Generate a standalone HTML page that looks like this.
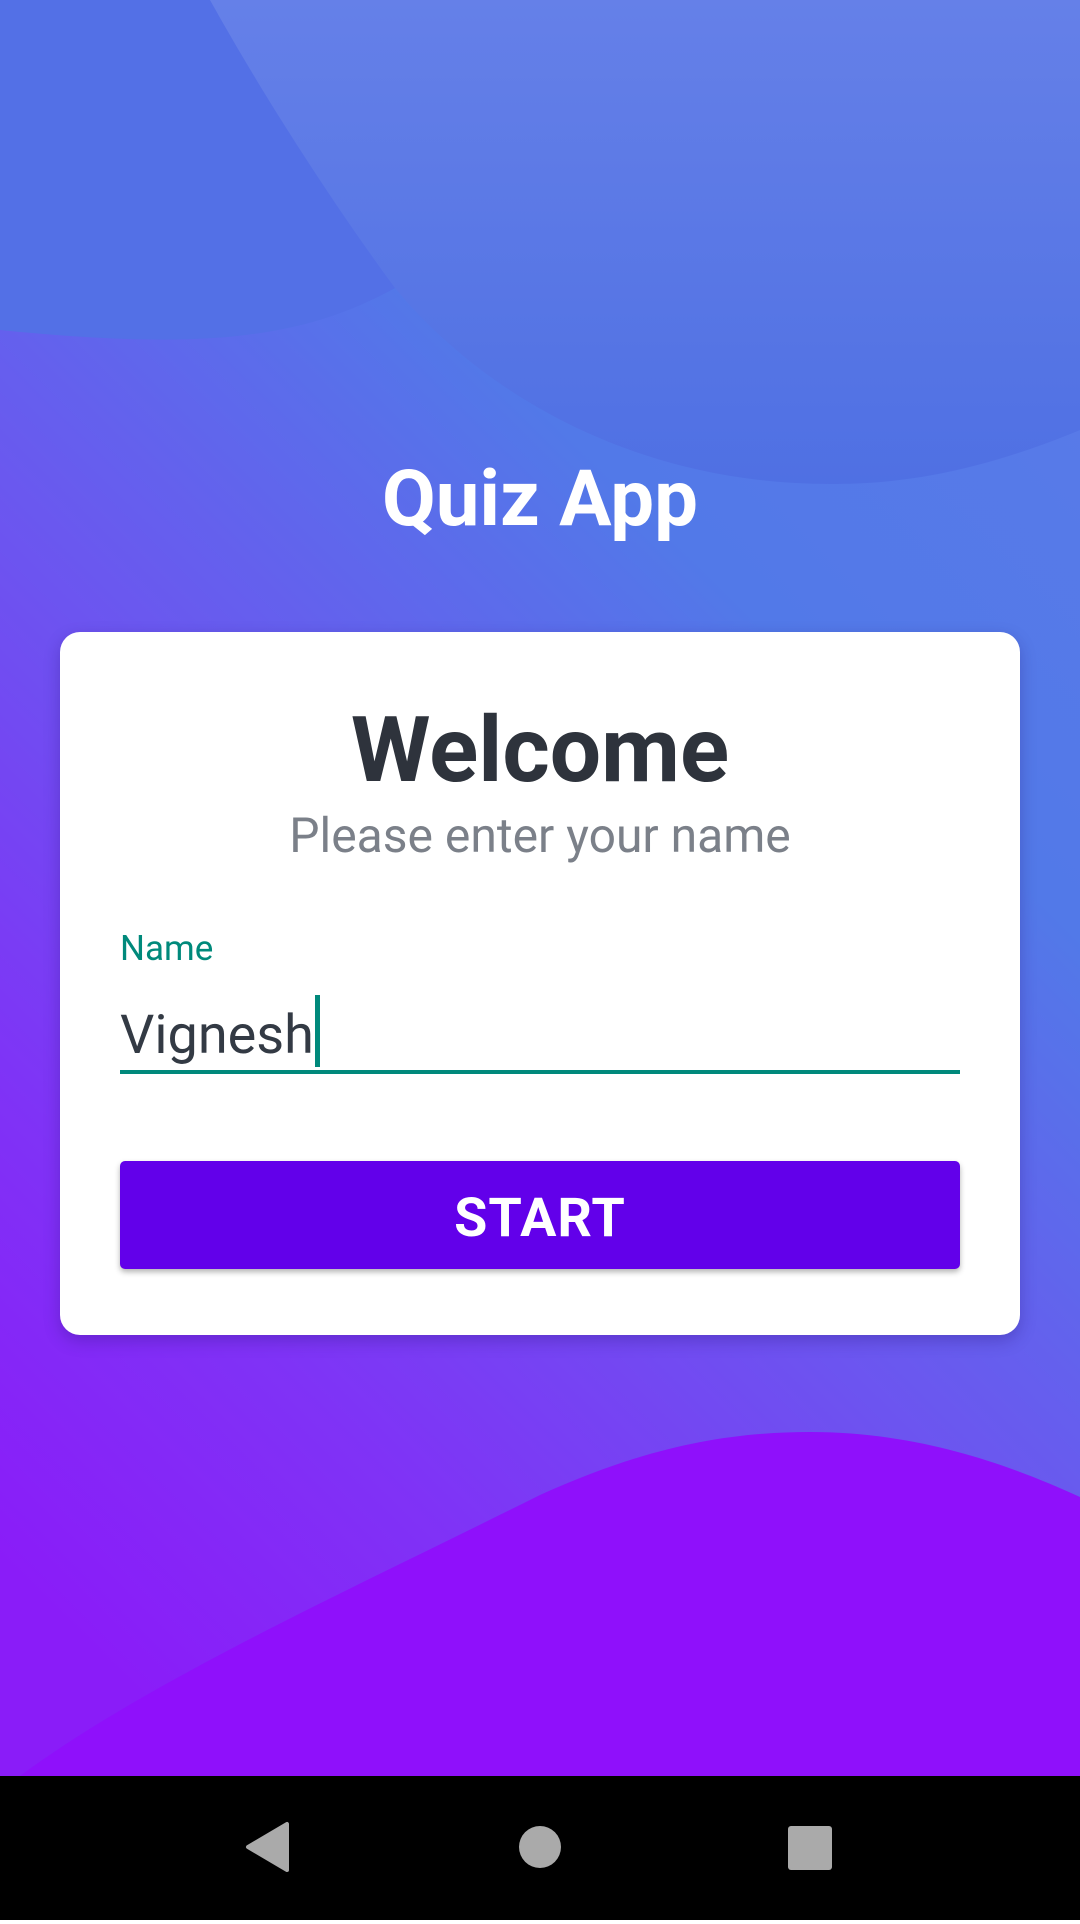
<!DOCTYPE html>
<html><head><meta charset="utf-8"><style>
html,body{margin:0;padding:0;}
body{width:1080px;height:1920px;position:relative;overflow:hidden;font-family:"Roboto","Liberation Sans",sans-serif;}
.bg{position:absolute;left:0;top:0;}
.title{position:absolute;left:0;width:1080px;top:452px;text-align:center;color:#fff;font-weight:bold;font-size:78px;line-height:96px;}
.card{position:absolute;left:60px;top:632px;width:960px;height:703px;background:#fff;border-radius:20px;box-shadow:0 6px 16px rgba(40,20,120,0.3);}
.welcome{position:absolute;left:0;width:960px;top:64px;text-align:center;font-weight:bold;font-size:91px;line-height:110px;color:#2e333c;}
.sub{position:absolute;left:0;width:960px;top:176px;text-align:center;font-size:48px;line-height:56px;color:#7b8089;}
.label{position:absolute;left:60px;top:297px;font-size:35px;color:#00897b;line-height:40px;}
.val{position:absolute;left:60px;top:363px;font-size:54px;color:#333a44;line-height:70px;}
.cursor{display:inline-block;width:5px;height:72px;background:#00897b;vertical-align:-14px;margin-left:1px;}
.line{position:absolute;left:60px;top:438px;width:840px;height:4px;background:#00897b;}
.btn{position:absolute;left:60px;top:529px;width:840px;height:108px;background:#6200ea;border-radius:5px;box-shadow:0 3px 6px rgba(0,0,0,0.3);color:#fff;font-size:54px;font-weight:bold;text-align:center;line-height:116px;letter-spacing:1px;}
.nav{position:absolute;left:0;top:1776px;width:1080px;height:144px;background:#000;}
</style></head><body>
<svg class="bg" width="1080" height="1776" viewBox="0 0 1080 1776">
<defs>
<linearGradient id="g" x1="0.8" y1="0" x2="0.2" y2="1">
<stop offset="0" stop-color="#5a7ae8"/>
<stop offset="0.3" stop-color="#5279e8"/>
<stop offset="0.55" stop-color="#6a58ef"/>
<stop offset="0.8" stop-color="#7f33f6"/>
<stop offset="1" stop-color="#8a1cf8"/>
</linearGradient>
<linearGradient id="t" x1="0" y1="0" x2="0" y2="1">
<stop offset="0" stop-color="#6580e8"/>
<stop offset="1" stop-color="#4f70e3"/>
</linearGradient>
</defs>
<rect width="1080" height="1776" fill="url(#g)"/>
<path d="M0 0 L210 0 L395 288 C300 340 200 350 0 330 Z" fill="#5370e6"/>
<path d="M210 0 L1080 0 L1080 430 C960 480 880 484 830 484 C620 484 470 380 395 288 C330 200 260 90 210 0 Z" fill="url(#t)"/>
<path d="M20 1776 C150 1680 350 1590 540 1495 C640 1450 720 1432 810 1432 C920 1432 1010 1465 1080 1497 L1080 1776 Z" fill="#8f10fb"/>
</svg>
<div class="title">Quiz App</div>
<div class="card">
<div class="welcome">Welcome</div>
<div class="sub">Please enter your name</div>
<div class="label">Name</div>
<div class="val">Vignesh<span class="cursor"></span></div>
<div class="line"></div>
<div class="btn">START</div>
</div>
<div class="nav">
<svg width="1080" height="144">
<path d="M287 48 L287 94 L248 71 Z" fill="#aaa" stroke="#aaa" stroke-width="4" stroke-linejoin="round"/>
<circle cx="540" cy="71" r="21" fill="#aaa"/>
<rect x="788" y="50" width="44" height="44" rx="3" fill="#aaa"/>
</svg>
</div>
</body></html>
